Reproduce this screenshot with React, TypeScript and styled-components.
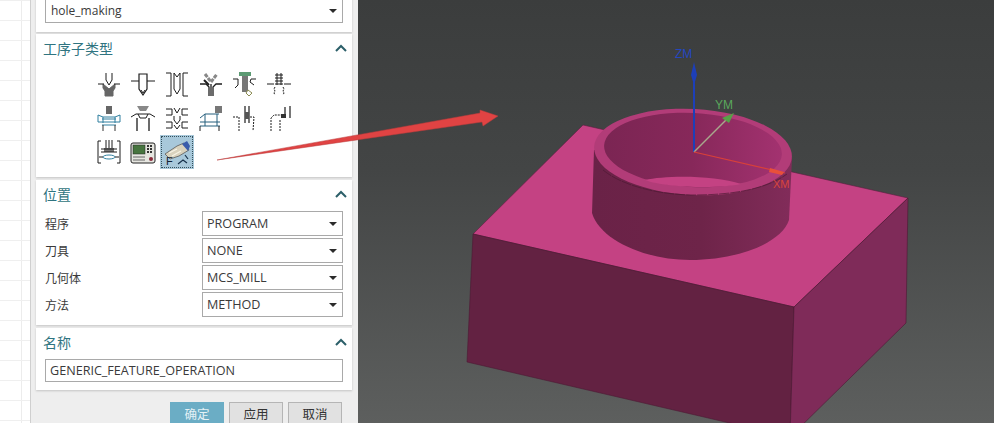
import styled, { createGlobalStyle } from 'styled-components';

const GlobalStyle = createGlobalStyle`
  html, body {
    margin: 0;
    padding: 0;
    overflow: hidden;
    background: #eeeeee;
  }
`;

const Page = styled.div`
  position: relative;
  display: flex;
  width: 994px;
  height: 423px;
  overflow: hidden;
  font-family: 'Open Sans', 'Noto Sans CJK SC', sans-serif;
  font-size: 12px;
  color: #3a3a3a;
`;

const Sheet = styled.div`
  flex: 0 0 30px;
  border-right: 1px solid #cfcfcf;
  background-color: #fff;
  background-image:
    linear-gradient(#efefef 1px, transparent 1px),
    linear-gradient(90deg, transparent 21px, #ececec 21px, #ececec 22px, transparent 22px);
  background-size: 100% 20px, 100% 100%;
`;

const Panel = styled.div`
  flex: 0 0 327px;
  box-sizing: border-box;
  display: flex;
  flex-direction: column;
  gap: 3px;
  padding: 0 6px 0 5px;
  background: #eeeeee;
`;

const Card = styled.section<{ $h: number }>`
  box-sizing: border-box;
  flex: 0 0 ${p => p.$h}px;
  padding: 0 9px;
  background: #fff;
  box-shadow: 0 1px 2px #c4c4c4;
`;

const TopCard = styled(Card)`
  margin-top: -3px;
  margin-bottom: -1px;
`;

const Header = styled.header`
  display: flex;
  align-items: center;
  justify-content: space-between;
  height: 28px;
  margin: 0 -4px 0 -2px;
  font-size: 14px;
  color: #2f7480;
`;

const Chevron = () => (
  <svg width="12" height="8" viewBox="0 0 12 8">
    <path d="M1 7 L6 2 L11 7" fill="none" stroke="#2c5f69" strokeWidth="2" />
  </svg>
);

const Combo = styled.div<{ $w?: number }>`
  box-sizing: border-box;
  display: flex;
  align-items: center;
  justify-content: space-between;
  width: ${p => p.$w ?? 298}px;
  height: 25px;
  padding: 0 5px 0 4px;
  border: 1px solid #a9a9a9;
  background: #fff;
  font-size: 12.6px;
  &::after {
    content: '';
    border-left: 4px solid transparent;
    border-right: 4px solid transparent;
    border-top: 4px solid #2b2b2b;
  }
`;

const MethodCombo = styled(Combo)`
  margin-top: 1px;
  padding-left: 5px;
  font-size: 12px;
`;

const IconGrid = styled.div`
  display: grid;
  grid-template-columns: repeat(6, 34px);
  grid-auto-rows: 34px;
  margin: 5px 0 0 47px;
`;

const IconCell = styled.div<{ $selected?: boolean }>`
  display: flex;
  align-items: center;
  justify-content: center;
  ${p =>
    p.$selected &&
    `
    background: #a8c8da;
    outline: 1px dotted #35505c;
    outline-offset: -2px;
  `}
`;

const Rows = styled.div`
  display: flex;
  flex-direction: column;
  gap: 2px;
  margin-top: 3px;
`;

const Row = styled.div`
  display: flex;
  align-items: center;
  justify-content: space-between;
`;

const NameInput = styled.div`
  box-sizing: border-box;
  height: 23px;
  margin-top: 3px;
  padding: 0 4px;
  border: 1px solid #a9a9a9;
  font-size: 12.6px;
  line-height: 21px;
`;

const Actions = styled.div`
  display: flex;
  justify-content: flex-end;
  gap: 5px;
  margin-top: 9px;
  padding-right: 10px;
`;

const ActionButton = styled.button<{ $primary?: boolean }>`
  box-sizing: border-box;
  width: 54px;
  height: 21px;
  padding: 3px 0 0;
  border: 1px solid ${p => (p.$primary ? '#6badc5' : '#b5b5b5')};
  border-bottom: none;
  background: ${p => (p.$primary ? '#6badc5' : '#e1e1e1')};
  color: ${p => (p.$primary ? '#e4f1f5' : '#333')};
  font: inherit;
  font-size: 12.5px;
  line-height: 16px;
`;

const Viewport = styled.main`
  flex: 1;
  background: linear-gradient(#3b3d3d 0%, #434545 40%, #5d5f5e 100%);
`;

const Scene = styled.svg`
  display: block;
`;

const ArrowOverlay = styled.svg`
  position: absolute;
  left: 0;
  top: 0;
  pointer-events: none;
`;

const k = '#1d1d1d';

const Icons: React.ReactNode[] = [
  <g key="a" fill="none" stroke={k}>
    <path d="M7 13 L13 18 L19 13 L19 17 L17 20 L17 25 L9 25 L9 20 L7 17 Z" fill="#666" stroke="#666" />
    <path d="M10 2 V9 L13 14 L16 9 V2 M2 13 H8 M18 13 H24" fill="#fff" />
  </g>,
  <g key="b" fill="none" stroke={k}>
    <path d="M9 3 H17 V18 L13 24 L9 18 Z" strokeWidth="1.2" />
    <path d="M1 10 H9 M17 10 H25 M11 19 L13 22 L15 19" />
  </g>,
  <g key="c" fill="none" stroke={k}>
    <path d="M10 2 V18 L13 23 L16 18 V2 M10 2 L13 6 L16 2" />
    <path d="M2 2 H7 V25 H2 M24 2 H19 V25 H24" />
  </g>,
  <g key="d" fill="none" stroke={k}>
    <path d="M7 3 L13 11 L19 3" stroke="#888" strokeWidth="3" strokeDasharray="4 1" />
    <path d="M2 13 H8 L11 16 V25 M24 13 H18 L15 16 V25 M13 13 V25" strokeWidth="1.3" />
    <path d="M6 9 L11 14" strokeWidth="2" />
  </g>,
  <g key="e" fill="none" stroke={k}>
    <rect x="7" y="1" width="12" height="4" fill="#5c9a73" stroke="none" />
    <rect x="10" y="5" width="6" height="16" fill="#777" stroke="none" />
    <path d="M16 19 L20 22 L17 25 L14 22 Z" fill="#fff" stroke="#8a8a50" />
    <path d="M1 8 H6 V14 L3 17 M24 8 H19 L18 11 L22 14" />
  </g>,
  <g key="f" fill="none" stroke={k}>
    <path d="M9 4 H17 M9 7 H17 M9 10 H17 M9 13 H17 M11 2 V14 M15 2 V14" />
    <path d="M1 13 H8 M18 13 H25" />
    <path d="M9 16 L8 18 L9 20 L8 22 L9 24 M17 16 L18 18 L17 20 L18 22 L17 24" strokeDasharray="2 1" />
  </g>,
  <g key="g" fill="none" stroke="#333">
    <rect x="10" y="1" width="6" height="8" fill="#666" stroke="none" />
    <path d="M2 10 L7 12 H19 L24 10 M2 10 V17 M24 10 V17 M2 17 H24" stroke="#2f7f9f" />
    <path d="M6 14 H20 M6 20 H20 M7 12 V18 M19 12 V18" stroke="#2f7f9f" />
    <path d="M7 20 V26 M19 20 V26" />
  </g>,
  <g key="h" fill="none" stroke={k}>
    <path d="M7 1 H19 L16 6 H10 Z" fill="#888" stroke="none" />
    <path d="M1 12 L6 9 H20 L25 12 M8 9 L10 13 H16 L18 9" />
    <path d="M7 13 V26 M19 13 V26" strokeWidth="1.3" />
  </g>,
  <g key="i" fill="none" stroke={k}>
    <path d="M2 4 H8 V7 M2 10 H8 V7 M24 4 H18 V7 M24 10 H18 V7" />
    <path d="M10 3 L13 8 L16 3 M10 11 V15 L13 19 L16 15 V11" />
    <path d="M2 17 H8 V23 H2 M24 17 H18 V23 H24 M10 20 L13 24 L16 20" />
  </g>,
  <g key="j" fill="none" stroke={k}>
    <rect x="17" y="1" width="7" height="7" fill="#777" stroke="none" />
    <path d="M2 13 L7 9 H21 M2 17 H22 M2 21 H22 M7 9 V21 M19 9 V21" stroke="#245e7d" />
    <path d="M2 21 V26 M21 21 V26" />
  </g>,
  <g key="l" fill="none" stroke={k}>
    <path d="M13 1 V18 M17 1 V18" strokeWidth="1.2" />
    <path d="M13 7 H17 V14 H13" fill="#555" stroke="none" />
    <path d="M1 12 H7 V26 M18 12 H22 L21 26" strokeDasharray="2 1" />
  </g>,
  <g key="m" fill="none" stroke={k}>
    <path d="M19 2 V13 M24 1 V13" strokeWidth="1.2" />
    <path d="M15 9 H20 V13 H15" fill="#333" stroke="none" />
    <path d="M5 26 V13 L8 10 H15 M14 26 V15" strokeDasharray="2 1" />
  </g>,
  <g key="n" fill="none" stroke={k}>
    <path d="M2 2 H5 M2 2 V24 H5 M24 2 H21 M24 2 V24 H21" />
    <rect x="8" y="9" width="10" height="4" fill="#777" stroke="none" />
    <path d="M10 1 V9 M13 1 V9 M16 1 V9 M5 10 H21 M5 13 H21" />
    <ellipse cx="13" cy="18" rx="6" ry="2" stroke="#2f7f9f" />
    <path d="M3 18 H7 M19 18 H23" />
  </g>,
  <g key="o">
    <rect x="1" y="4" width="24" height="20" rx="2" fill="#e6e6e0" stroke="#222" />
    <rect x="3" y="6" width="12" height="9" fill="#47753f" stroke="#222" strokeWidth="0.5" />
    <path d="M17 7 H23 M17 10 H23 M17 13 H23" stroke="#333" strokeWidth="2" strokeDasharray="2 1" />
    <path d="M3 18 H15 M3 21 H15" stroke="#666" />
    <circle cx="21" cy="20" r="2" fill="#8a2a3a" />
  </g>,
  <g key="p">
    <path d="M1 15 L13 7 L20 4 L25 11 L15 17 L6 20 Z" fill="#d9d2bd" stroke="#5a5a5a" strokeWidth="0.8" />
    <path d="M18 5 L23 2 L26 7 L24 12 Z" fill="#3a5cab" />
    <path d="M5 14 L13 10 M8 17 L17 12" stroke="#f6f2e4" strokeWidth="1.3" />
    <path d="M14 25 L19 21 L23 24 M21 16 L24 20" fill="none" stroke="#16304a" strokeWidth="1.2" />
    <text x="2" y="26" fontSize="11" fontFamily="'Liberation Sans', sans-serif" fill="#123">F</text>
  </g>,
];

const positions = [
  ['程序', 'PROGRAM'],
  ['刀具', 'NONE'],
  ['几何体', 'MCS_MILL'],
  ['方法', 'METHOD'],
];

const App = () => {
  return (
    <Page>
      <GlobalStyle />
      <Sheet />
      <Panel>
        <TopCard $h={35}>
          <MethodCombo>hole_making</MethodCombo>
        </TopCard>
        <Card $h={143}>
          <Header>
            工序子类型
            <Chevron />
          </Header>
          <IconGrid>
            {Icons.map((icon, i) => (
              <IconCell key={i} $selected={i === 14}>
                <svg width="26" height="27" viewBox="0 0 26 27">
                  {icon}
                </svg>
              </IconCell>
            ))}
          </IconGrid>
        </Card>
        <Card $h={145}>
          <Header>
            位置
            <Chevron />
          </Header>
          <Rows>
            {positions.map(([label, value]) => (
              <Row key={label}>
                {label}
                <Combo $w={141}>{value}</Combo>
              </Row>
            ))}
          </Rows>
        </Card>
        <Card $h={62}>
          <Header>
            名称
            <Chevron />
          </Header>
          <NameInput>GENERIC_FEATURE_OPERATION</NameInput>
        </Card>
        <Actions>
          <ActionButton $primary>确定</ActionButton>
          <ActionButton>应用</ActionButton>
          <ActionButton>取消</ActionButton>
        </Actions>
      </Panel>
      <Viewport>
        <Scene width="636" height="423" viewBox="358 0 636 423">
          <defs>
            <linearGradient id="wall" x1="0" x2="1" y1="0" y2="0">
              <stop offset="0" stopColor="#6a2247" />
              <stop offset="0.55" stopColor="#6e2449" />
              <stop offset="1" stopColor="#822c5a" />
            </linearGradient>
            <linearGradient id="inner" x1="0" x2="1" y1="0" y2="0">
              <stop offset="0" stopColor="#7b2553" />
              <stop offset="0.5" stopColor="#87285a" />
              <stop offset="1" stopColor="#a33270" />
            </linearGradient>
          </defs>
          {/* block */}
          <polygon points="473,234 583,125 908,198 794,307" fill="#c44283" stroke="#5a2040" strokeWidth="0.6" />
          <polygon points="473,234 794,307 790,437 467,362" fill="#632242" stroke="#4d1a34" strokeWidth="0.6" />
          <polygon points="794,307 908,198 906,323 790,437" fill="#7f2b59" stroke="#4d1a34" strokeWidth="0.6" />
          {/* boss */}
          <path d="M594 150 L592 213 C600 240 645 260 690 260 C740 260 782 242 789 220 L792 158 Z" fill="url(#wall)" />
          <ellipse cx="693" cy="152" rx="99" ry="43" fill="#b23c78" transform="rotate(3 693 152)" />
          <ellipse cx="693" cy="150" rx="89" ry="37" fill="url(#inner)" transform="rotate(3 693 150)" />
          <path d="M645 180 C665 175 715 175 741 184 C720 189 665 188 645 180 Z" fill="#c44283" />
          <path d="M603 170 C625 188 665 195 693 195 C730 195 765 190 787 174" fill="none" stroke="#4d1a34" strokeWidth="0.7" strokeDasharray="10 1" />
          {/* csys */}
          <path d="M694 152 V68" stroke="#1d3fb8" strokeWidth="2" />
          <path d="M694 62 L697 75 L694 85 L691 75 Z" fill="#1d3fb8" />
          <path d="M694 152 L730 116" stroke="#a8a88c" strokeWidth="1.5" />
          <path d="M734 113 L722 118 L729 123 Z" fill="#58a048" />
          <path d="M694 152 L785 173" stroke="#d8403a" strokeWidth="1.2" />
          <path d="M770 168 L784 172 L782 175 L769 172 Z" fill="#e8503a" />
          <text x="675" y="58" fontSize="12" fill="#2447c0" fontFamily="'Liberation Sans', sans-serif">ZM</text>
          <text x="715" y="109" fontSize="12" fill="#5aa85c" fontFamily="'Liberation Sans', sans-serif">YM</text>
          <text x="773" y="188" fontSize="11" fill="#d8453c" fontFamily="'Liberation Sans', sans-serif">XM</text>
        </Scene>
      </Viewport>
      <ArrowOverlay width="994" height="423" viewBox="0 0 994 423">
        <polygon points="217,160 480,113 480,110 498,116 483,126 482,122" fill="#e04343" stroke="#b83c3c" strokeWidth="0.5" />
      </ArrowOverlay>
    </Page>
  );
};

export default App;
